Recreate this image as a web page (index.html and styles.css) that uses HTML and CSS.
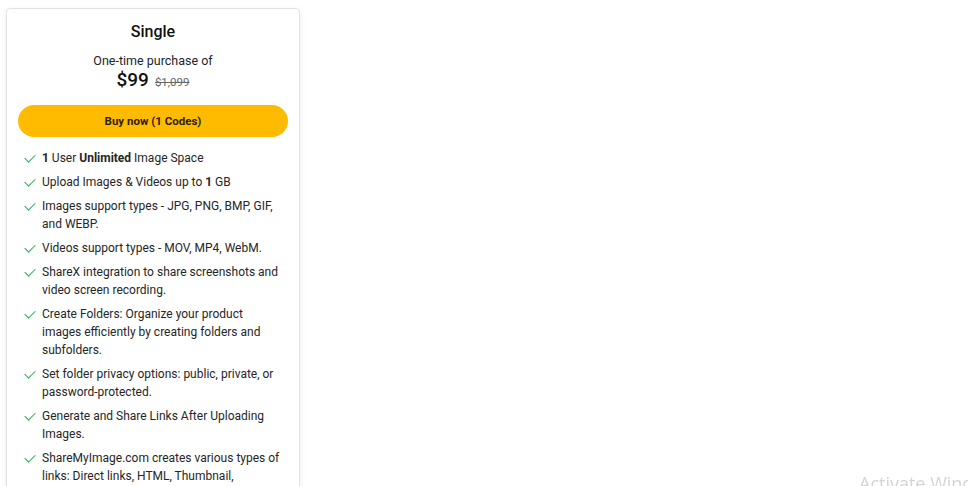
FILE: index.html
```
<!DOCTYPE html>
<html lang="en">
  <head>
    <meta charset="UTF-8" />
    <link rel="stylesheet" href="styles.css">
  </head>
  <body>
    <div class="planCard">
      <h3 class="planTitle">Single</h3>
      <div class="planSub">One-time purchase of</div>
      <div class="planPrice">
        <span class="priceNow">$99</span>
        <span class="priceOld">$1,099</span>
      </div>
      <button class="buyButton">Buy now (1 Codes)</button>

      <ul class="featureList">
        <li><span class="tick"></span><span><b>1</b> User <b>Unlimited</b> Image Space</span></li>
        <li><span class="tick"></span><span>Upload Images &amp; Videos up to <b>1</b> GB</span></li>
        <li><span class="tick"></span><span>Images support types - JPG, PNG, BMP, GIF, and WEBP.</span></li>
        <li><span class="tick"></span><span>Videos support types - MOV, MP4, WebM.</span></li>
        <li><span class="tick"></span><span>ShareX integration to share screenshots and video screen recording.</span></li>
        <li><span class="tick"></span><span>Create Folders: Organize your product images efficiently by creating folders and subfolders.</span></li>
        <li><span class="tick"></span><span>Set folder privacy options: public, private, or password-protected.</span></li>
        <li><span class="tick"></span><span>Generate and Share Links After Uploading Images.</span></li>
        <li><span class="tick"></span><span>ShareMyImage.com creates various types of links: Direct links, HTML, Thumbnail, BBCode&nbsp;and Markdown.</span></li>
      </ul>
    </div>

    <div class="activateMark">Activate Windows</div>
  </body>
</html>
```

FILE: styles.css
```
html, body {
  margin: 0;
  height: 100%;
  overflow: hidden;
  background: #fff;
}

body {
  padding: 8px 0 0 6px;
  font-family: Roboto, "Noto Sans", sans-serif;
  color: #212529;
}

.planCard {
  width: 294px;
  box-sizing: border-box;
  border: 1px solid #e2e2e2;
  border-radius: 4px;
  box-shadow: 0 2px 6px rgba(0, 0, 0, 0.08);
  padding: 13px 11px 20px 11px;
  text-align: center;
  background: #fff;
}

.planTitle {
  margin: 0;
  font-size: 16px;
  font-weight: 500;
  line-height: 20px;
  color: #111;
}

.planSub {
  margin-top: 11px;
  font-size: 12.5px;
  line-height: 16px;
}

.planPrice {
  line-height: 22px;
  margin-top: 0;
}

.priceNow {
  font-size: 19px;
  font-weight: 500;
  color: #111;
}

.priceOld {
  font-size: 11.5px;
  color: #666;
  text-decoration: line-through;
  margin-left: 2px;
}

.buyButton {
  display: block;
  width: 100%;
  height: 32px;
  margin-top: 12px;
  border: none;
  border-radius: 16px;
  background: #ffbb00;
  font-family: Roboto, sans-serif;
  font-size: 11.5px;
  font-weight: 700;
  color: #2b2100;
  cursor: pointer;
}

.featureList {
  list-style: none;
  margin: 12px 0 0 0;
  padding: 0 8px 0 5px;
  text-align: left;
  font-size: 12px;
  line-height: 18px;
  color: #262626;
}

.featureList li {
  display: flex;
  margin-bottom: 6px;
}

.featureList b {
  font-weight: 700;
}

.tick {
  flex: none;
  width: 9px;
  height: 5px;
  margin: 5px 7px 0 2px;
  border-left: 1.3px solid #2eae5a;
  border-bottom: 1.3px solid #2eae5a;
  transform: rotate(-45deg);
}

.activateMark {
  position: fixed;
  left: 859px;
  top: 471px;
  font-family: "Segoe UI", "Open Sans", sans-serif;
  font-size: 18px;
  color: #d4d4d4;
  white-space: nowrap;
}
```
